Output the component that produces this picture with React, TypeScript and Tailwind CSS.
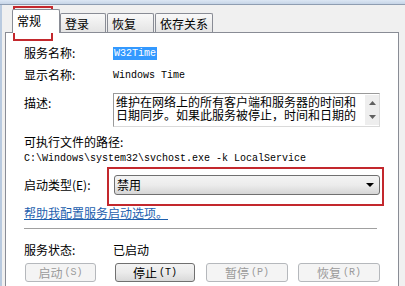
import React from 'react'

const cjk = "font-['Noto_Sans_CJK_SC',sans-serif]"
const mono = "font-['Liberation_Mono',monospace] text-[10px]"

function Tab({ label, active, width }: { label: string; active?: boolean; width: string }) {
  if (active) {
    return (
      <div className={`relative z-10 h-[24px] ${width} border border-b-0 border-[#898c95] rounded-t-[2px] bg-white pl-[4px] pt-[3px] leading-[16px]`}>
        {label}
      </div>
    )
  }
  return (
    <div className={`h-[20px] ${width} border border-b-0 border-[#898c95] rounded-t-[2px] bg-gradient-to-b from-[#f9f9f9] to-[#e3e3e3] pl-[4px] pt-[2px] leading-[16px]`}>
      {label}
    </div>
  )
}

function Btn({ label, hot, width, disabled }: { label: string; hot: string; width: string; disabled?: boolean }) {
  return (
    <div
      className={`${width} h-[19px] rounded-[3px] border flex items-center justify-center leading-[16px] ${
        disabled
          ? 'border-[#b5b8bc] bg-[#f4f4f4] text-[#9a9a9a]'
          : 'border-[#707070] bg-gradient-to-b from-[#f3f3f3] via-[#ebebeb] to-[#d9d9d9] text-black'
      }`}
    >
      {label}
      <span className={`${mono} ml-[2px]`}>({hot})</span>
    </div>
  )
}

export default function App() {
  return (
    <div className={`relative w-[405px] h-[286px] overflow-hidden bg-[#f0f0f0] text-[12px] text-black ${cjk}`}>
      {/* window frame top */}
      <div className="h-[5px] bg-gradient-to-b from-[#dce7f4] to-[#c6d5e7] border-b border-[#8e9db1]" />
      <div className="flex h-[281px]">
        <div className="w-[2px] bg-[#b9cadf]" />
        <div className="ml-[3px] pt-[4px] flex flex-col">
          <div className="flex items-end h-[24px] pl-[7px]">
            <Tab label="常规" active width="w-[48px]" />
            <Tab label="登录" width="w-[46px]" />
            <div className="ml-[1px]"><Tab label="恢复" width="w-[47px]" /></div>
            <div className="ml-[1px]"><Tab label="依存关系" width="w-[58px]" /></div>
          </div>

          <div className="-mt-px w-[394px] flex-1 border border-b-0 border-[#898c95] bg-white pl-[18px] flex flex-col">
            <div className="mt-[12px] h-[16px] flex items-center">
              <span className="w-[89px]">服务名称:</span>
              <span className={`${mono} leading-[13px] bg-[#3399ff] text-white px-px`}>W32Time</span>
            </div>
            <div className="mt-[6px] h-[16px] flex items-center">
              <span className="w-[89px]">显示名称:</span>
              <span className={mono}>Windows Time</span>
            </div>
            <div className="mt-[10px] flex items-start">
              <span className="w-[89px] pt-[2px] leading-[16px]">描述:</span>
              <div className="w-[267px] h-[34px] flex border border-[#dadada] border-t-[#9a9a9a] border-l-[#9a9a9a]">
                <div className="flex-1 pl-[2px] leading-[13px] pt-[1px]">
                  维护在网络上的所有客户端和服务器的时间和
                  <br />
                  日期同步。如果此服务被停止，时间和日期的
                </div>
                <div className="w-[14px] my-[1px] bg-[#eeeeee] flex flex-col items-center justify-between py-[6px]">
                  <svg width="7" height="4" viewBox="0 0 7 4"><path d="M0 4 L3.5 0 L7 4 Z" fill="#606060" /></svg>
                  <svg width="7" height="4" viewBox="0 0 7 4"><path d="M0 0 L3.5 4 L7 0 Z" fill="#606060" /></svg>
                </div>
              </div>
            </div>
            <div className="mt-[7px] h-[16px] leading-[16px]">可执行文件的路径:</div>
            <div className={`mt-[1px] h-[16px] leading-[16px] ${mono}`}>C:\Windows\system32\svchost.exe -k LocalService</div>
            <div className="mt-[8px] h-[20px] flex items-center">
              <span className="w-[90px]">启动类型(E):</span>
              <div className="w-[266px] h-[20px] rounded-[3px] border border-[#707070] bg-gradient-to-b from-[#f4f4f4] via-[#ececec] to-[#d6d6d6] flex items-center justify-between pl-[2px] pr-[5px]">
                <span className="leading-[16px]">禁用</span>
                <svg width="8" height="4" viewBox="0 0 8 4"><path d="M0 0 L8 0 L4 4 Z" fill="#000" /></svg>
              </div>
            </div>
            <div className="mt-[10px] h-[16px] leading-[16px] text-[#1d5fae] underline">帮助我配置服务启动选项。</div>
            <div className="mt-[7px] h-px w-[353px] bg-[#a0a0a0]" />
            <div className="mt-[13px] h-[16px] flex items-center">
              <span className="w-[89px]">服务状态:</span>
              <span>已启动</span>
            </div>
            <div className="mt-[5px] flex">
              <div className="ml-px"><Btn label="启动" hot="S" width="w-[71px]" disabled /></div>
              <div className="ml-[19px]"><Btn label="停止" hot="T" width="w-[80px]" /></div>
              <div className="ml-[11px]"><Btn label="暂停" hot="P" width="w-[82px]" disabled /></div>
              <div className="ml-[10px]"><Btn label="恢复" hot="R" width="w-[82px]" disabled /></div>
            </div>
          </div>
        </div>
      </div>

      {/* red annotation boxes */}
      <div className="absolute left-[13px] top-[6px] w-[40px] h-[35px] border-2 border-[#c3282d]" />
      <div className="absolute left-[107px] top-[167px] w-[277px] h-[39px] border-2 border-[#c3282d]" />
    </div>
  )
}
